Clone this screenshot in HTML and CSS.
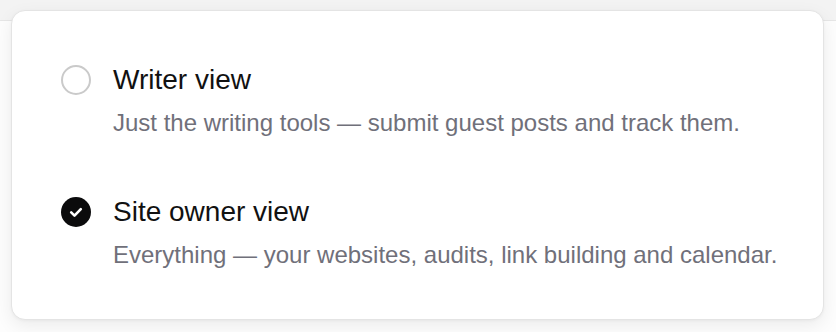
FILE: index.html
```html
<!DOCTYPE html>
<html lang="en">
<head>
    <meta charset="UTF-8">
    <meta name="viewport" content="width=device-width, initial-scale=1.0">
    <title>View mode</title>
    <link rel="stylesheet" href="styles.css">
</head>
<body>
    <div class="topbar"></div>

    <!-- Popover chọn chế độ xem -->
    <div class="view-menu">
        <div class="view-option">
            <span class="radio"></span>
            <div class="option-title">Writer view</div>
            <div class="option-desc">Just the writing tools — submit guest posts and track them.</div>
        </div>

        <div class="view-option selected">
            <span class="radio">
                <svg width="30" height="30" viewBox="0 0 30 30">
                    <circle cx="15" cy="15" r="15" fill="#0b0b0c"/>
                    <path d="M10.2 15.4 L13.5 18.6 L19.8 12.2" fill="none" stroke="#fff" stroke-width="2.6" stroke-linecap="round" stroke-linejoin="round"/>
                </svg>
            </span>
            <div class="option-title">Site owner view</div>
            <div class="option-desc">Everything — your websites, audits, link building and calendar.</div>
        </div>
    </div>
</body>
</html>
```

FILE: styles.css
```css
* {
    box-sizing: border-box;
    margin: 0;
    padding: 0;
    font-family: 'Liberation Sans', Arial, Helvetica, sans-serif;
}

body {
    background-color: #fdfdfd;
    color: #111;
    width: 836px;
    height: 332px;
    overflow: hidden;
    position: relative;
}

.topbar {
    height: 21px;
    background-color: #f3f3f3;
    border-bottom: 1px solid #e6e6e6;
}

.view-menu {
    position: absolute;
    top: 10px;
    left: 11px;
    width: 813px;
    height: 310px;
    padding: 51px 24px 0 49px;
    background: white;
    border: 1px solid #e4e4e4;
    border-radius: 14px;
    box-shadow: 0 6px 18px rgba(0, 0, 0, 0.07), 0 1px 3px rgba(0, 0, 0, 0.04);
}

.view-option {
    display: grid;
    grid-template-columns: 30px 1fr;
    column-gap: 22px;
}

.view-option + .view-option {
    margin-top: 55px;
}

.radio {
    grid-row: 1;
    grid-column: 1;
    align-self: center;
    width: 30px;
    height: 30px;
    border: 2px solid #cacaca;
    border-radius: 50%;
}

.selected .radio {
    border: none;
}

.radio svg {
    display: block;
}

.option-title {
    grid-row: 1;
    grid-column: 2;
    font-size: 28px;
    line-height: 36px;
    color: #111;
}

.option-desc {
    grid-row: 2;
    grid-column: 2;
    margin-top: 9px;
    font-size: 24px;
    line-height: 32px;
    color: #70707a;
    white-space: nowrap;
}
```
